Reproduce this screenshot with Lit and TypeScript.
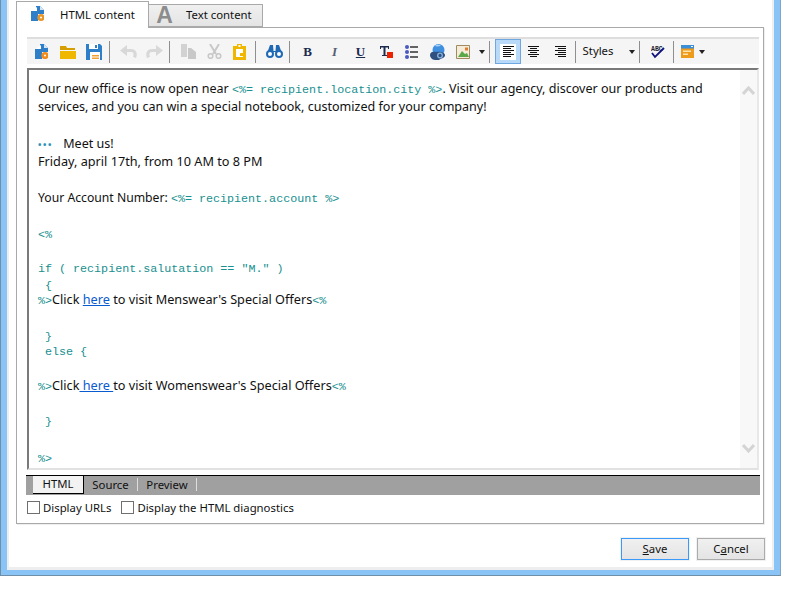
import { LitElement, html, css, svg } from "lit";
import { customElement } from "lit/decorators.js";

const ic = (w: number, h: number, body: unknown) => html`<svg class="ic" width=${w} height=${h} viewBox="0 0 ${w} ${h}">${body}</svg>`;

const docGear = (gear: string) => svg`
  <path d="M0 5 L5 5 L5 0 L9 0 L13 4 L13 8 L7 8 L7 15 L0 15 Z" fill="#2f7fc8"/>
  <path d="M6 1 L6 5 L1 5 Z" fill="#fff"/>
  <path d="M9 0 L9 4 L13 4 Z" fill="#fff" opacity=".8"/>
  <circle cx="10" cy="11.500" r="3.600" fill=${gear}/><circle cx="10" cy="11.500" r="1" fill="#fff"/>`;

const lines3 = (d: string) => ic(11, 12, svg`<path d=${d} fill="#111"/>`);
const serif = (t: string, cls: string) => html`<span class=${cls}>${t}</span>`;

// Toolbar items: page x of the item's left edge, its width, and what it shows.
const SEP = html`<div class="sep"></div>`;
const CARET = html`<div class="caret"></div>`;
const TOOLS: [number, number, unknown][] = [
  [35, 13, ic(13, 15, docGear("#f08a1a"))],
  [60, 16, ic(16, 14, svg`<path d="M0 3V1h6l1 2h8v2H0z" fill="#d69e00"/><path d="M0 6h16v8H0z" fill="#efb700"/>`)],
  [86, 16, ic(16, 16, svg`<path d="M0 0h14l2 2v14H0z" fill="#2d7fc9"/><path d="M3 0h9v5H3z" fill="#fff"/><path d="M9 1h2v3H9z" fill="#2d7fc9"/><path d="M4 8h10v8H4z" fill="#fff"/><path d="M6 11h7v1.500H6zM6 13.500h7V15H6z" fill="#f0a030"/>`)],
  [109, 1, SEP],
  [120, 17, ic(17, 13, svg`<path d="M7 0L0 5.500 7 11z" fill="#d8d8d8"/><path d="M5 5.500h6c4 0 5 3.500 3.500 7" fill="none" stroke="#d8d8d8" stroke-width="3.200"/>`)],
  [146, 17, ic(17, 13, svg`<path d="M10 0l7 5.500L10 11z" fill="#d8d8d8"/><path d="M12 5.500H6c-4 0-5 3.500-3.500 7" fill="none" stroke="#d8d8d8" stroke-width="3.200"/>`)],
  [169, 1, SEP],
  [181, 15, ic(15, 15, svg`<path d="M0 0h6v13H0z" fill="#d2d2d2"/><path d="M7 4h3l5 4v7H7z" fill="#c8c8c8"/>`)],
  [207, 15, ic(15, 15, svg`<path d="M3 0l6 10M12 0L6 10" stroke="#c8c8c8" stroke-width="2" fill="none"/><circle cx="3.500" cy="12" r="2.300" fill="none" stroke="#c8c8c8" stroke-width="1.600"/><circle cx="11.500" cy="12" r="2.300" fill="none" stroke="#c8c8c8" stroke-width="1.600"/>`)],
  [233, 13, ic(13, 16, svg`<path d="M0 2h4V0h5v2h4v14H0z" fill="#efb700"/><path d="M5.500 1h2v2h-2z" fill="#fff"/><path d="M3 5h7v8H3z" fill="#fff"/><path d="M7 9h3v3H7z" fill="#efb700"/>`)],
  [255, 1, SEP],
  [266, 17, ic(17, 13, svg`<circle cx="4" cy="9" r="3" fill="#fff" stroke="#1f69b5" stroke-width="2"/><circle cx="13" cy="9" r="3" fill="#fff" stroke="#1f69b5" stroke-width="2"/><path d="M1.500 7L4 0h3l.5 6h2l.5-6h3l2.500 7z" fill="#1f69b5"/>`)],
  [289, 1, SEP],
  [303, 9, serif("B", "fmt b")],
  [331, 7, serif("I", "fmt i")],
  [356, 9, serif("U", "fmt u")],
  [380, 13, ic(13, 12, svg`<path d="M0 0h9v3H8V1.500H5.500V9H7v1H2V9h1.500V1.500H1V3H0z" fill="#1c2c50"/><path d="M7 6h6v6H7z" fill="#ee2200"/>`)],
  [405, 13, ic(13, 14, svg`<circle cx="2" cy="2" r="2" fill="#4a58c0"/><circle cx="2" cy="7" r="2" fill="#4a58c0"/><circle cx="2" cy="12" r="2" fill="#4a58c0"/><path d="M5 1.300h8v1.400H5zM5 6.300h8v1.400H5zM5 11.300h8v1.400H5z" fill="#333"/>`)],
  [430, 16, ic(16, 16, svg`<circle cx="8.500" cy="6" r="6" fill="#3f8ee0"/><path d="M5 2c2-2 5-1 6 0-2 0-4 1-6 0z" fill="#a9d2f5"/><path d="M0 11c0-3 3-4 6-3 3-1 9 0 9 3 0 3-3 3-6 5H5c-3 0-5-3-5-5z" fill="#30507f"/><circle cx="10" cy="11.500" r="2.300" fill="none" stroke="#8ab4e0" stroke-width="1.300"/>`)],
  [456, 14, ic(14, 14, svg`<path d="M.5.500h13v13H.5z" fill="#f4ecd8" stroke="#a08a60"/><path d="M2 12l4-6 3 3 2-1 2 4z" fill="#5aa84a"/><path d="M9 2.500h3v3H9z" fill="#e07a30"/>`)],
  [478, 7, CARET],
  [489, 1, SEP],
  [495, 26, html`<div class="sel"><i>${lines3("M0 0h11v1H0zM0 2h8v1H0zM0 4h11v1H0zM0 6h8v1H0zM0 8h11v1H0zM0 10h8v1H0z")}</i></div>`],
  [528, 11, lines3("M0 0h11v1H0zM2 2h7v1H2zM0 4h11v1H0zM2 6h7v1H2zM0 8h11v1H0zM2 10h7v1H2z")],
  [555, 11, lines3("M0 0h11v1H0zM3 2h8v1H3zM0 4h11v1H0zM3 6h8v1H3zM0 8h11v1H0zM3 10h8v1H3z")],
  [575, 1, SEP],
  [583, 30, html`<span class="lbl">Styles</span>`],
  [628, 7, CARET],
  [639, 1, SEP],
  [651, 14, ic(14, 14, svg`<text x="0" y="6" font-family="Liberation Mono" font-size="6.500" font-weight="700" fill="#223">ABC</text><path d="M1 8l3 4 9-9" fill="none" stroke="#12127e" stroke-width="1.800"/>`)],
  [673, 1, SEP],
  [681, 13, ic(13, 13, svg`<path d="M0 0h13v13H0z" fill="#ee9a1a"/><path d="M0 0h13v3.500H0z" fill="#3d8ed8"/><path d="M10 1h2v1h-2z" fill="#fff"/><path d="M2 5.500h8V7H2zM2 8.500h5V10H2z" fill="#fce3b0"/>`)],
  [698, 7, CARET],
];

@customElement("app-root")
export class AppRoot extends LitElement {
  static styles = css`
    :host { display: block; width: 803px; height: 600px; background: #fff; font-family: "Noto Sans", "Open Sans", sans-serif; font-size: 11.35px; color: #111; overflow: hidden; }
    .frame { width: 781px; height: 576px; box-sizing: border-box; background: #8ac3f6; border-left: 1px solid #6f8fa8; border-right: 1px solid #7fa6c8; border-bottom: 1px solid #6f8fa8; padding: 0 6px 5px 6px; }
    .win { height: 100%; box-sizing: border-box; background: #fff; border-left: 2px solid #eee; border-right: 2px solid #eee; border-bottom: 3px solid #eee; padding: 1px 9px 0 7px; display: flex; flex-direction: column; }
    .tabs { display: flex; align-items: flex-end; height: 26px; position: relative; z-index: 1; }
    .tab { box-sizing: border-box; display: flex; align-items: center; border: 1px solid #a9a9a9; padding-bottom: 2px; }
    .tab.on { width: 133px; height: 27px; margin-bottom: -1px; background: #fff; border-bottom: 0; padding-left: 14px; gap: 16px; }
    .tab.off { width: 115px; height: 23px; margin-left: -1px; background: linear-gradient(#f0f0f0, #e4e4e4); padding-left: 7px; gap: 13px; }
    .panel { width: 748px; height: 497px; box-sizing: border-box; border: 1px solid #a9a9a9; box-shadow: 1px 1px 0 #eee; padding: 9px 3px 0 10px; display: flex; flex-direction: column; }
    .toolbar { width: 732px; height: 27px; box-sizing: border-box; background: #f5f5f5; border-top: 2px solid #dedede; display: flex; align-items: center; flex: none; }
    .item { display: flex; align-items: center; justify-content: center; flex: none; }
    .ic { display: block; flex: none; }
    .sep { width: 1px; height: 22px; background: #8f8f8f; }
    .sel { box-sizing: border-box; width: 26px; height: 25px; border: 1px solid #6fa8e0; background: #b9d9f8; display: flex; align-items: center; justify-content: center; }
    .sel i { display: flex; width: 16px; height: 16px; background: #fff; align-items: center; justify-content: center; }
    .caret { width: 0; height: 0; border-left: 3.5px solid transparent; border-right: 3.5px solid transparent; border-top: 4px solid #222; }
    .lbl { white-space: nowrap; padding-bottom: 2px; }
    .fmt { font-family: "Liberation Serif", serif; font-size: 13px; color: #1c2c50; font-weight: 700; line-height: 14px; }
    .fmt.i { font-style: italic; color: #555f72; }
    .fmt.u { text-decoration: underline; }
    .editor { margin-top: 4px; width: 732px; height: 402px; box-sizing: border-box; border-top: 2px solid #7a7a7a; border-left: 2px solid #7a7a7a; border-bottom: 2px solid #e2e2e2; border-right: 2px solid #e8e8e8; display: flex; flex: none; }
    .body { flex: 1; padding: 10px 0 0 9px; line-height: 18px; font-size: 12.55px; white-space: pre; overflow: hidden; }
    .sb { width: 17px; background: #f8f8f8; display: flex; flex-direction: column; justify-content: space-between; align-items: center; padding: 16px 0 15px; box-sizing: border-box; }
    code { font-family: "Liberation Mono", monospace; font-size: 11.7px; color: #17908f; }
    .ln { display: block; height: 18px; }
    .wide { font-size: 12.7px; line-height: 16px; }
    .narrow { font-size: 12.2px; }
    .dots { color: #2a8fb8; font-size: 9px; font-weight: 700; letter-spacing: 1.6px; margin-right: 7px; }
    a { color: #0a5ad0; text-decoration: underline; }
    .bar { margin-top: 5px; margin-left: -1px; width: 734px; height: 20px; box-sizing: border-box; background: #a0a0a0; border-top: 1px solid #000; display: flex; padding-left: 7px; flex: none; }
    .st { box-sizing: border-box; height: 18px; display: flex; align-items: center; justify-content: center; }
    .st.on { width: 51px; background: #f2f2f2; border-right: 1px solid #000; border-bottom: 1px solid #000; padding-bottom: 2px; }
    .st.s { width: 54px; border-right: 1px solid #ddd; height: 13px; margin-top: 2px; padding-bottom: 1px; }
    .st.p { width: 59px; border-right: 1px solid #ddd; height: 13px; margin-top: 2px; padding-bottom: 1px; }
    .checks { display: flex; align-items: center; margin-top: 5px; height: 14px; flex: none; }
    .cb { width: 11px; height: 11px; border: 1px solid #6f6f6f; background: #fff; flex: none; margin-right: 3px; }
    .checks span { margin-right: 10px; }
    .foot { display: flex; justify-content: flex-end; gap: 8px; padding-top: 14px; width: 749px; }
    .btn { box-sizing: border-box; width: 68px; height: 22px; padding-bottom: 2px; display: flex; align-items: center; justify-content: center; border: 1px solid #ababab; background: linear-gradient(#f0f0f0, #e4e4e4); box-shadow: 0 0 0 1px #f1f1f1; }
    .btn.def { border-color: #3b99fc; }
    .big { font-family: "Liberation Sans", sans-serif; font-weight: 700; font-size: 23px; color: #8c8c8c; line-height: 20px; width: 17px; text-align: center; }
  `;

  private tools() {
    let right = 27;
    return TOOLS.map(([x, w, c]) => {
      const ml = x - right;
      right = x + w;
      return html`<div class="item" style="width:${w}px;margin-left:${ml}px">${c}</div>`;
    });
  }

  render() {
    const row = (h: number, c: unknown, cls = "") => html`<span class="ln ${cls}" style="height:${h}px">${c}</span>`;
    const lines = html`${row(18, html`Our new office is now open near <code>&lt;%= recipient.location.city %&gt;</code>. Visit our agency, discover our products and`)}${row(18, "services, and you can win a special notebook, customized for your company!")}${row(19, " ")}${row(18, html`<span class="dots">•••</span> Meet us!`)}${row(18, "Friday, april 17th, from 10 AM to 8 PM", "wide")}${row(18, " ")}${row(18, html`Your Account Number: <code>&lt;%= recipient.account %&gt;</code>`, "narrow")}${row(18, " ")}${row(17, html`<code>&lt;%</code>`)}${row(17, " ")}${row(17, html`<code>if ( recipient.salutation == "M." )</code>`)}${row(15, html`<code> {</code>`)}${row(20, html`<code>%&gt;</code>Click <a>here</a> to visit Menswear's Special Offers<code>&lt;%</code>`, "wide")}${row(16, " ")}${row(15, html`<code> }</code>`)}${row(17, html`<code> else {</code>`)}${row(18, " ")}${row(20, html`<code>%&gt;</code>Click<a> here </a>to visit Womenswear's Special Offers<code>&lt;%</code>`, "wide")}${row(15, " ")}${row(17, html`<code> }</code>`)}${row(20, " ")}${row(18, html`<code>%&gt;</code>`)}`;
    return html`<div class="frame"><div class="win">
      <div class="tabs">
        <div class="tab on">${ic(13, 16, docGear("#e8962c"))}<span>HTML content</span></div>
        <div class="tab off"><span class="big">A</span><span>Text content</span></div>
      </div>
      <div class="panel">
        <div class="toolbar">${this.tools()}</div>
        <div class="editor">
          <div class="body">${lines}</div>
          <div class="sb">
            ${ic(13, 9, svg`<path d="M1 8l5.500-6 5.500 6" fill="none" stroke="#d4d4d4" stroke-width="3"/>`)}
            ${ic(13, 9, svg`<path d="M1 1l5.500 6 5.500-6" fill="none" stroke="#d4d4d4" stroke-width="3"/>`)}
          </div>
        </div>
        <div class="bar">
          <div class="st on">HTML</div><div class="st s">Source</div><div class="st p">Preview</div>
        </div>
        <div class="checks"><div class="cb"></div><span>Display URLs</span><div class="cb"></div><span>Display the HTML diagnostics</span></div>
      </div>
      <div class="foot"><div class="btn def"><span><u>S</u>ave</span></div><div class="btn"><span>C<u>a</u>ncel</span></div></div>
    </div></div></div>`;
  }
}
